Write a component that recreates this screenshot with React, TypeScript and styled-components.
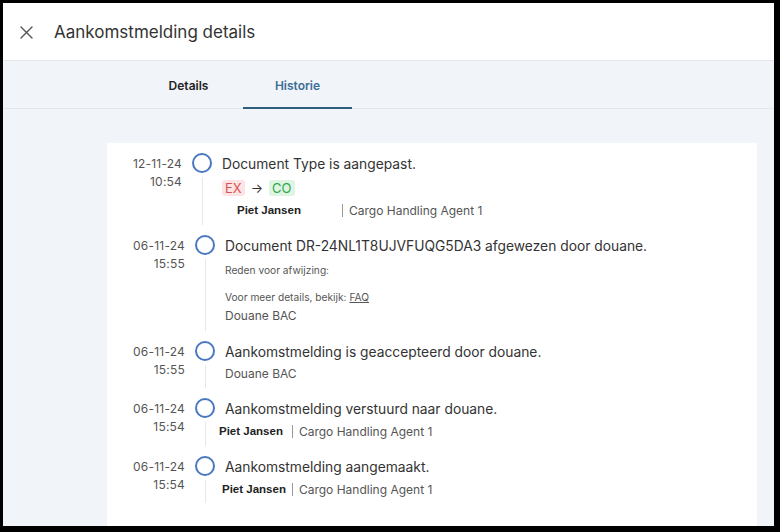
import React from "react";
import styled, { createGlobalStyle } from "styled-components";

const Global = createGlobalStyle`
  html, body { margin: 0; padding: 0; background: #000; }
  * { box-sizing: border-box; }
  body { font-family: Inter, "Noto Sans", Arial, sans-serif; }
`;

const Frame = styled.div`
  width: 780px;
  height: 532px;
  background: #000;
  padding: 3px 6px 6px 3px;
`;

const Window = styled.div`
  width: 100%;
  height: 100%;
  background: #f1f4f8;
  display: flex;
  flex-direction: column;
  overflow: hidden;
`;

const Header = styled.div`
  height: 58px;
  flex: none;
  background: #fff;
  border-bottom: 1px solid #e3e6ea;
  display: flex;
  align-items: center;
  padding-left: 16px;
  gap: 21px;
`;

const CloseButton = styled.button`
  border: 0;
  background: none;
  padding: 0;
  width: 14px;
  height: 14px;
  display: flex;
  align-items: center;
  justify-content: center;
  color: #555;
  margin-top: 1px;
`;

const Title = styled.h1`
  margin: 0;
  font-size: 17px;
  font-weight: 400;
  color: #333;
`;

const TabBar = styled.div`
  height: 48px;
  flex: none;
  display: flex;
  padding-left: 131px;
  border-bottom: 1px solid #e3e6ea;
`;

const Tab = styled.div<{ $active?: boolean }>`
  width: 109px;
  display: flex;
  align-items: center;
  justify-content: center;
  font-size: 12px;
  font-weight: 600;
  color: ${(p) => (p.$active ? "#3c6e94" : "#222")};
  border-bottom: 2px solid ${(p) => (p.$active ? "#2f5d7c" : "transparent")};
  margin-bottom: -1px;
  padding-top: 2px;
`;

const Body = styled.div`
  flex: 1;
  padding: 34px 17px 0 104px;
  display: flex;
`;

const Card = styled.div`
  flex: 1;
  background: #fff;
  padding: 10px 0 0 0;
  display: flex;
  flex-direction: column;
  gap: 10px;
`;

const Item = styled.div<{ $shift?: number }>`
  display: grid;
  grid-template-columns: 78px 20px 1fr;
  column-gap: 10px;
  margin-left: ${(p) => p.$shift ?? 0}px;
`;

const DateCol = styled.div`
  text-align: right;
  font-size: 12px;
  line-height: 18px;
  color: #555;
  padding-top: 2px;
  letter-spacing: 0.2px;
`;

const Marker = styled.div`
  display: flex;
  flex-direction: column;
  align-items: center;
`;

const Circle = styled.div`
  width: 20px;
  height: 20px;
  border-radius: 50%;
  border: 2px solid #4a78c0;
  flex: none;
`;

const Line = styled.div`
  width: 1px;
  flex: 1;
  background: #e4e7eb;
  margin-top: 4px;
`;

const Content = styled.div<{ $pb?: number }>`
  display: flex;
  flex-direction: column;
  padding-bottom: ${(p) => p.$pb ?? 4}px;
`;

const EventTitle = styled.div`
  font-size: 13.8px;
  line-height: 20px;
  color: #333;
  font-weight: 400;
  padding-top: 1px;
`;

const Tags = styled.div`
  display: flex;
  align-items: center;
  gap: 6px;
  margin-top: 6px;
`;

const Tag = styled.span<{ $tone: "red" | "green" }>`
  display: inline-flex;
  align-items: center;
  height: 16px;
  padding: 0 3px;
  border-radius: 3px;
  font-size: 13px;
  background: ${(p) => (p.$tone === "red" ? "#fde3e3" : "#ddf5e2")};
  color: ${(p) => (p.$tone === "red" ? "#d65454" : "#32a54e")};
`;

const Arrow = styled.span`
  font-size: 13px;
  color: #333;
`;

const AgentRow = styled.div<{ $indent?: number; $mt?: number }>`
  display: flex;
  align-items: center;
  margin-left: ${(p) => p.$indent ?? 0}px;
  margin-top: ${(p) => p.$mt ?? 2}px;
  line-height: 20px;
`;

const Name = styled.span<{ $w?: number; $gap?: number }>`
  font-family: "Liberation Sans", Arial, sans-serif;
  font-weight: 700;
  font-size: 11.5px;
  color: #222;
  ${(p) => (p.$w ? `width: ${p.$w}px;` : `margin-right: ${p.$gap ?? 9}px;`)}
`;

const Role = styled.span`
  font-size: 12px;
  color: #555;
  border-left: 1px solid #999;
  padding-left: 6px;
  line-height: 13px;
`;

const Small = styled.div<{ $mt?: number }>`
  font-size: 10.2px;
  line-height: 16px;
  color: #555;
  margin-top: ${(p) => p.$mt ?? 0}px;
`;

const Link = styled.span`
  text-decoration: underline;
`;

const Sub = styled.div<{ $mt?: number }>`
  font-size: 12px;
  line-height: 20px;
  color: #555;
  margin-top: ${(p) => p.$mt ?? 2}px;
`;

const CloseIcon = () => (
  <svg width="13" height="13" viewBox="0 0 13 13" fill="none">
    <path d="M1 1L12 12M12 1L1 12" stroke="currentColor" strokeWidth="1.4" strokeLinecap="round" />
  </svg>
);

type Ev = {
  date: string;
  time: string;
  shift?: number;
  pb?: number;
  children: React.ReactNode;
};

const Event = ({ date, time, shift, pb, children }: Ev) => (
  <Item $shift={shift}>
    <DateCol>
      {date}
      <br />
      {time}
    </DateCol>
    <Marker>
      <Circle />
      <Line />
    </Marker>
    <Content $pb={pb}>{children}</Content>
  </Item>
);

export default function App() {
  return (
    <Frame>
      <Global />
      <Window>
        <Header>
          <CloseButton aria-label="Sluiten">
            <CloseIcon />
          </CloseButton>
          <Title>Aankomstmelding details</Title>
        </Header>
        <TabBar>
          <Tab>Details</Tab>
          <Tab $active>Historie</Tab>
        </TabBar>
        <Body>
          <Card>
            <Event date="12-11-24" time="10:54" shift={-3} pb={5}>
              <EventTitle>Document Type is aangepast.</EventTitle>
              <Tags>
                <Tag $tone="red">EX</Tag>
                <Arrow>→</Arrow>
                <Tag $tone="green">CO</Tag>
              </Tags>
              <AgentRow $indent={15} $mt={4}>
                <Name $w={105}>Piet Jansen</Name>
                <Role>Cargo Handling Agent 1</Role>
              </AgentRow>
            </Event>
            <Event date="06-11-24" time="15:55" pb={5}>
              <EventTitle>Document DR-24NL1T8UJVFUQG5DA3 afgewezen door douane.</EventTitle>
              <Small $mt={6}>Reden voor afwijzing:</Small>
              <Small $mt={11}>
                Voor meer details, bekijk: <Link>FAQ</Link>
              </Small>
              <Sub $mt={1}>Douane BAC</Sub>
            </Event>
            <Event date="06-11-24" time="15:55">
              <EventTitle>Aankomstmelding is geaccepteerd door douane.</EventTitle>
              <Sub>Douane BAC</Sub>
            </Event>
            <Event date="06-11-24" time="15:54" pb={5}>
              <EventTitle>Aankomstmelding verstuurd naar douane.</EventTitle>
              <AgentRow $indent={-6}>
                <Name>Piet Jansen</Name>
                <Role>Cargo Handling Agent 1</Role>
              </AgentRow>
            </Event>
            <Event date="06-11-24" time="15:54">
              <EventTitle>Aankomstmelding aangemaakt.</EventTitle>
              <AgentRow $indent={-3}>
                <Name $gap={6}>Piet Jansen</Name>
                <Role>Cargo Handling Agent 1</Role>
              </AgentRow>
            </Event>
          </Card>
        </Body>
      </Window>
    </Frame>
  );
}
